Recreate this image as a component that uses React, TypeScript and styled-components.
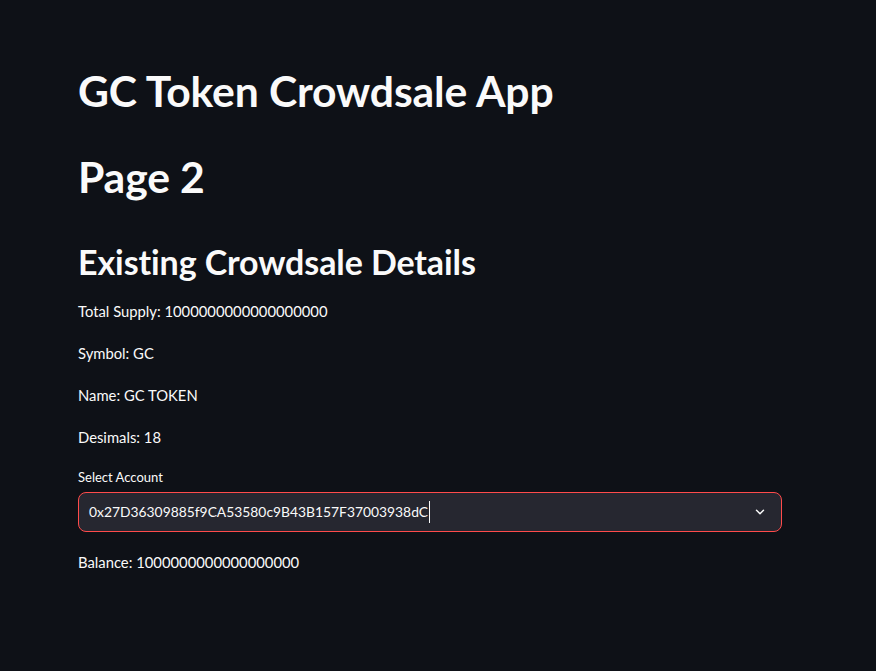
import React from "react";
import styled, { createGlobalStyle } from "styled-components";

const Global = createGlobalStyle`
  html, body { margin: 0; padding: 0; background: #0e1117; }
  body { font-family: "Lato", "Liberation Sans", sans-serif; color: #fafafa; }
  * { box-sizing: border-box; }
`;

const Main = styled.main`
  min-height: 671px;
  padding: 64px 0 0 78px;
  display: flex;
  flex-direction: column;
  width: 782px;
`;

const Title = styled.h1<{ $mb: number }>`
  margin: 0 0 ${(p) => p.$mb}px;
  font-size: 42.7px;
  line-height: 53px;
  font-weight: 700;
  letter-spacing: -0.15px;
`;

const SubTitle = styled.h2`
  margin: 0 0 16px;
  font-size: 34px;
  line-height: 43px;
  font-weight: 700;
  letter-spacing: -0.1px;
`;

const Para = styled.p<{ $mb?: number }>`
  margin: 0 0 ${(p) => p.$mb ?? 18}px;
  font-size: 14.8px;
  line-height: 24px;
`;

const Label = styled.label`
  font-size: 13px;
  line-height: 20px;
  margin-bottom: 5px;
`;

const SelectBox = styled.div`
  height: 40px;
  width: 704px;
  background: #262730;
  border: 1px solid #ff4b4b;
  border-radius: 8px;
  display: flex;
  align-items: center;
  padding: 0 14px 0 10px;
  margin-bottom: 18px;
`;

const Value = styled.span`
  font-size: 13.85px;
  line-height: 24px;
  display: flex;
  align-items: center;
`;

const Caret = styled.span`
  display: inline-block;
  width: 1px;
  height: 22px;
  background: #fafafa;
  margin-left: 1px;
`;

const Chevron = styled.svg`
  margin-left: auto;
  width: 14px;
  height: 14px;
`;

export default function App() {
  return (
    <>
      <Global />
      <Main>
        <Title $mb={33}>GC Token Crowdsale App</Title>
        <Title $mb={37}>Page 2</Title>
        <SubTitle>Existing Crowdsale Details</SubTitle>
        <Para>Total Supply: 1000000000000000000</Para>
        <Para>Symbol: GC</Para>
        <Para>Name: GC TOKEN</Para>
        <Para>Desimals: 18</Para>
        <Label>Select Account</Label>
        <SelectBox>
          <Value>
            0x27D36309885f9CA53580c9B43B157F37003938dC
            <Caret />
          </Value>
          <Chevron viewBox="0 0 24 24" fill="none" stroke="#fafafa" strokeWidth="2.5" strokeLinecap="round" strokeLinejoin="round">
            <path d="M6 9l6 6 6-6" />
          </Chevron>
        </SelectBox>
        <Para $mb={0}>Balance: 1000000000000000000</Para>
      </Main>
    </>
  );
}
